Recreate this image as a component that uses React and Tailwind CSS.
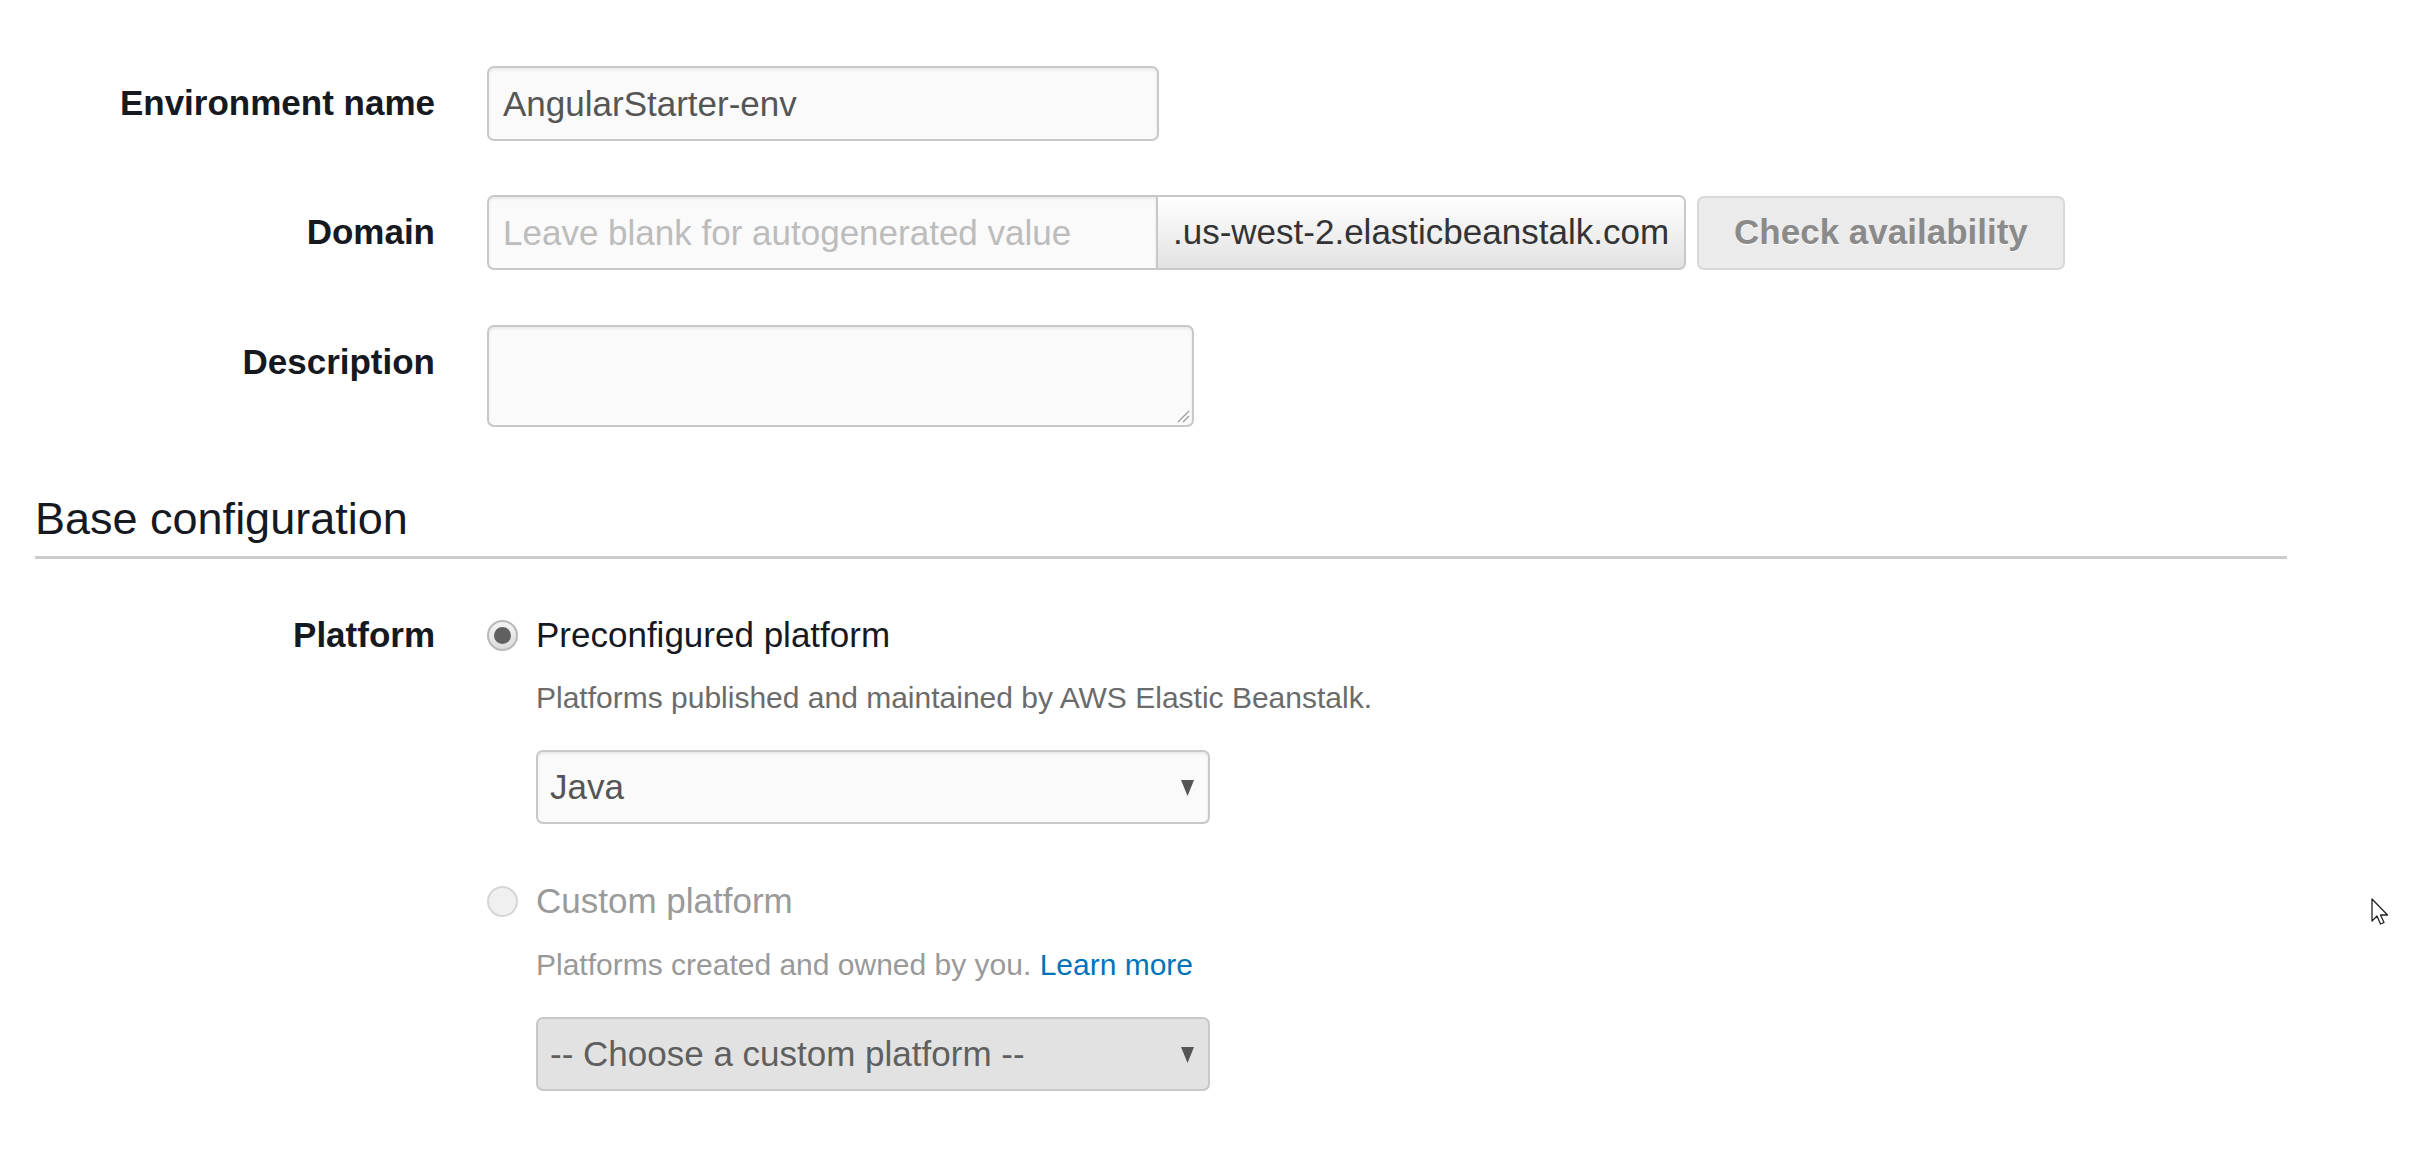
import React from 'react'

// ── Helpers ─────────────────────────────────────────────────────────────────

function FieldLabel({ children, className = '' }) {
  return (
    <div className={`w-[400px] shrink-0 flex items-center justify-end font-bold text-[35px] text-[#16191f] ${className}`}>
      {children}
    </div>
  )
}

function Radio({ checked, disabled }) {
  if (disabled) {
    return (
      <span className="w-[31px] h-[31px] rounded-full border-2 border-[#d6d6d6] bg-[#f0f0f0] shrink-0" />
    )
  }
  return (
    <span className="w-[31px] h-[31px] rounded-full border-2 border-[#b8b8b8] bg-gradient-to-b from-[#f4f4f4] to-[#dcdcdc] shrink-0 flex items-center justify-center">
      {checked && <span className="w-[17px] h-[17px] rounded-full bg-[#606060]" />}
    </span>
  )
}

function Caret() {
  return (
    <svg width="13" height="17" viewBox="0 0 13 17" className="shrink-0">
      <path d="M0 1 L13 1 L6.5 17 Z" fill="#555" />
    </svg>
  )
}

function SelectBox({ value, disabled }) {
  return (
    <div
      className={`ml-[1px] w-[674px] h-[74px] rounded-[7px] border-2 border-[#c8c8c8] flex items-center justify-between pl-[12px] pr-[14px] text-[35px]
        ${disabled ? 'bg-[#e2e2e2] text-[#5f5f5f]' : 'bg-[#fafafa] text-[#555] shadow-[inset_0_2px_3px_rgba(0,0,0,0.07)]'}`}
    >
      <span>{value}</span>
      <Caret />
    </div>
  )
}

// ── App ──────────────────────────────────────────────────────────────────────

export default function App() {
  const inputCls =
    'h-[75px] bg-[#fafafa] border-2 border-[#c8c8c8] text-[35px] text-[#555] px-[14px] outline-none shadow-[inset_0_2px_3px_rgba(0,0,0,0.07)] placeholder:text-[#bcbcbc]'

  return (
    <div className="min-h-screen bg-white font-['Liberation_Sans',Arial,sans-serif]">
      <div className="pl-[35px] pt-[66px] w-[2287px]">
        {/* ── Environment name ── */}
        <div className="flex">
          <FieldLabel className="h-[75px]">Environment name</FieldLabel>
          <input
            readOnly
            value="AngularStarter-env"
            className={`${inputCls} ml-[52px] w-[672px] rounded-[7px]`}
          />
        </div>

        {/* ── Domain ── */}
        <div className="flex mt-[54px]">
          <FieldLabel className="h-[75px]">Domain</FieldLabel>
          <div className="ml-[52px] flex items-center">
            <input
              readOnly
              placeholder="Leave blank for autogenerated value"
              className={`${inputCls} w-[671px] rounded-l-[7px]`}
            />
            <div className="h-[75px] flex items-center px-[15px] border-2 border-l-0 border-[#c8c8c8] rounded-r-[7px] bg-gradient-to-b from-white to-[#e2e2e2] text-[35px] text-[#333] whitespace-nowrap">
              .us-west-2.elasticbeanstalk.com
            </div>
            <button className="ml-[11px] h-[74px] px-[35px] rounded-[7px] border-2 border-[#d8d8d8] bg-[#ebebeb] text-[35px] font-bold text-[#8a8a8a] [text-shadow:0_1px_0_#fff] whitespace-nowrap">
              Check availability
            </button>
          </div>
        </div>

        {/* ── Description ── */}
        <div className="flex mt-[55px]">
          <FieldLabel className="h-[75px]">Description</FieldLabel>
          <div className="ml-[52px] w-[707px] h-[102px] rounded-[7px] bg-[#fafafa] border-2 border-[#c8c8c8] shadow-[inset_0_2px_3px_rgba(0,0,0,0.07)] flex items-end justify-end p-[2px]">
            <svg width="14" height="14" viewBox="0 0 14 14">
              <path d="M13 2 L2 13 M13 7 L7 13" stroke="#9a9a9a" strokeWidth="1.2" />
            </svg>
          </div>
        </div>

        {/* ── Base configuration ── */}
        <h2 className="mt-[67px] text-[45px] leading-[50px] text-[#16191f] pb-[12px] border-b-[3px] border-[#cccccc]">
          Base configuration
        </h2>

        {/* ── Platform ── */}
        <div className="flex mt-[56px]">
          <FieldLabel className="h-[40px]">Platform</FieldLabel>
          <div className="ml-[52px] flex flex-col">
            <div className="h-[40px] flex items-center gap-[18px]">
              <Radio checked />
              <span className="text-[35px] text-[#16191f]">Preconfigured platform</span>
            </div>
            <div className="pl-[49px]">
              <p className="mt-[23px] text-[30px] leading-[40px] text-[#6b6b6b]">
                Platforms published and maintained by AWS Elastic Beanstalk.
              </p>
            </div>
            <div className="pl-[48px] mt-[32px]">
              <SelectBox value="Java" />
            </div>

            <div className="mt-[57px] h-[40px] flex items-center gap-[18px]">
              <Radio disabled />
              <span className="text-[35px] text-[#9a9a9a]">Custom platform</span>
            </div>
            <div className="pl-[49px]">
              <p className="mt-[24px] text-[30px] leading-[40px] text-[#999]">
                Platforms created and owned by you.{' '}
                <a className="text-[#0073bb]">Learn more</a>
              </p>
            </div>
            <div className="pl-[48px] mt-[32px]">
              <SelectBox value="-- Choose a custom platform --" disabled />
            </div>
          </div>
        </div>
      </div>

      {/* mouse pointer left in the capture */}
      <svg
        width="20"
        height="28"
        viewBox="0 0 20 28"
        className="absolute left-[2371px] top-[898px]"
      >
        <path d="M1 1 L1 23 L6 18 L9.5 26 L13 24.5 L9.5 17 L16.5 17 Z" fill="#fff" stroke="#222" strokeWidth="1.3" strokeLinejoin="round" />
      </svg>
    </div>
  )
}
